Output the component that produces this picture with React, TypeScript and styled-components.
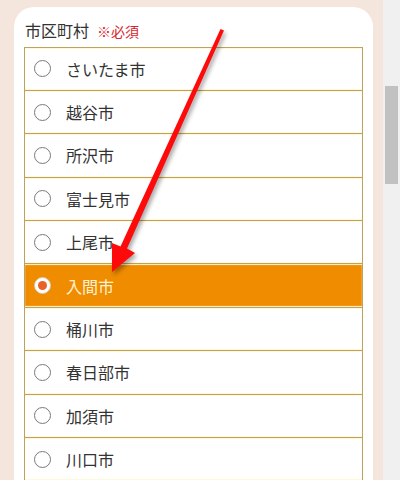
import React from "react";
import styled, { createGlobalStyle } from "styled-components";

const Global = createGlobalStyle`
  html, body { margin: 0; padding: 0; height: 100%; overflow: hidden; }
  body { font-family: "Noto Sans CJK JP", "Noto Sans", sans-serif; background: #f0f0f0; }
  #root { height: 100%; }
`;

const Page = styled.div`
  position: relative;
  display: flex;
  height: 480px;
  width: 400px;
  overflow: hidden;
`;

const Main = styled.div`
  width: 383px;
  background: #f4e6dd;
  padding: 7px 10px 0 14px;
  box-sizing: border-box;
`;

const Track = styled.div`
  width: 17px;
  background: #f0f0f0;
  padding: 86px 2px 0 2px;
  box-sizing: border-box;
`;

const Thumb = styled.div`
  height: 98px;
  background: #c1c1c1;
`;

const Card = styled.div`
  background: #ffffff;
  border-radius: 20px 20px 0 0;
  padding: 12px 10px 0 10px;
  height: 600px;
  box-sizing: border-box;
`;

const Label = styled.div`
  display: flex;
  align-items: baseline;
  gap: 8px;
  height: 22px;
  line-height: 22px;
  margin-bottom: 5.5px;
  font-size: 16px;
  color: #333;
  padding-left: 1px;
`;

const Required = styled.span`
  font-size: 14px;
  color: #d7262c;
`;

const List = styled.div`
  border: 1px solid #bda15c;
  border-bottom: none;
`;

const Row = styled.div<{ $selected?: boolean }>`
  display: flex;
  align-items: center;
  height: 42.4px;
  border-bottom: 1px solid #bda15c;
  box-shadow: inset 0 1px 1px #fff8d8, inset 0 -1px 1px #fff8d8;
  padding-left: 9px;
  gap: 15px;
  background: ${(p) => (p.$selected ? "#ef8c00" : "#ffffff")};
  color: ${(p) => (p.$selected ? "#fff2d2" : "#333333")};
  font-size: 16px;
`;

const Radio = styled.span<{ $selected?: boolean }>`
  width: 17px;
  height: 17px;
  box-sizing: border-box;
  border-radius: 50%;
  border: 1px solid ${(p) => (p.$selected ? "#d9c9b0" : "#7a7a7a")};
  background: #fff;
  display: flex;
  align-items: center;
  justify-content: center;
  flex-shrink: 0;
  &::after {
    content: "";
    display: ${(p) => (p.$selected ? "block" : "none")};
    width: 9px;
    height: 9px;
    border-radius: 50%;
    background: #e8632a;
  }
`;

const ArrowSvg = styled.svg`
  position: absolute;
  left: 0;
  top: 0;
  width: 400px;
  height: 480px;
  pointer-events: none;
  filter: drop-shadow(2px 3px 2px rgba(0, 0, 0, 0.35));
`;

const cities = [
  "さいたま市",
  "越谷市",
  "所沢市",
  "富士見市",
  "上尾市",
  "入間市",
  "桶川市",
  "春日部市",
  "加須市",
  "川口市",
];

export default function App() {
  return (
    <>
      <Global />
      <Page>
        <Main>
          <Card>
            <Label>
              <span>市区町村</span>
              <Required>※必須</Required>
            </Label>
            <List>
              {cities.map((c) => (
                <Row key={c} $selected={c === "入間市"}>
                  <Radio $selected={c === "入間市"} />
                  <span>{c}</span>
                </Row>
              ))}
            </List>
          </Card>
        </Main>
        <Track>
          <Thumb />
        </Track>
        <ArrowSvg viewBox="0 0 400 480">
          <polygon
            points="220.5,29 224,30.5 127,248.5 135,253 112,272 112,243 120.5,246.5"
            fill="#ff0a0a"
          />
        </ArrowSvg>
      </Page>
    </>
  );
}
